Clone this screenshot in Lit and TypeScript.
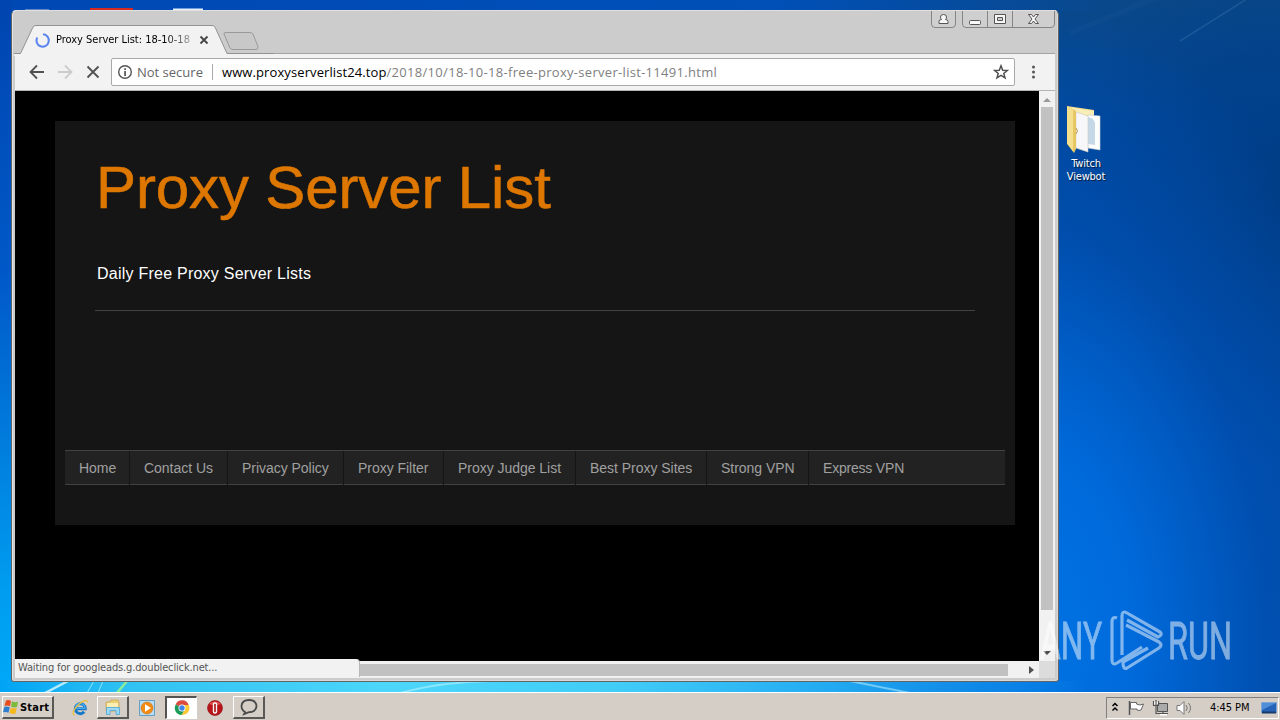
import { LitElement, css, html, svg } from 'lit';
import { customElement } from 'lit/decorators.js';

const NAV_LINKS = [
	'Home',
	'Contact Us',
	'Privacy Policy',
	'Proxy Filter',
	'Proxy Judge List',
	'Best Proxy Sites',
	'Strong VPN',
	'Express VPN',
];

@customElement('proxy-page')
export class ProxyPage extends LitElement {
	render() {
		return html`
			<div class="content">
				<header class="header">
					<h1 class="title">Proxy Server List</h1>
					<p class="description">Daily Free Proxy Server Lists</p>
				</header>
				<nav class="tabs">${NAV_LINKS.map((link) => html`<a class="tab">${link}</a>`)}</nav>
			</div>
		`;
	}

	static get styles() {
		return css`
			:host {
				display: block;
				box-sizing: border-box;
				padding: 30px 24px 0 40px;
				background: #000;
				font-family: 'Liberation Sans', Arial, sans-serif;
				overflow: hidden;
			}

			.content {
				box-sizing: border-box;
				height: 404px;
				padding: 30px 10px 0;
				background: #151515;
			}

			.header {
				box-sizing: border-box;
				height: 160px;
				margin: 0 30px 139px;
				padding-left: 2px;
				border-bottom: 1px solid #424242;
			}

			.title {
				margin: 0 0 0 -1px;
				padding-top: 1px;
				font-size: 60px;
				font-weight: 400;
				line-height: 72px;
				letter-spacing: -0.12px;
				color: #dd7700;
				-webkit-text-stroke: 0.6px #dd7700;
			}

			.description {
				margin: 40px 0 0;
				font-size: 16px;
				line-height: 20px;
				letter-spacing: 0.24px;
				color: #fff;
			}

			.tabs {
				display: grid;
				grid-template-columns: 65px 98px 116px 100px 132px 131px 102px 1fr;
				box-sizing: border-box;
				height: 35px;
				border-top: 1px solid #424242;
				border-bottom: 1px solid #424242;
				background: #222;
			}

			.tab {
				padding-left: 14px;
				border-right: 1px solid #151515;
				font-size: 14px;
				line-height: 34px;
				letter-spacing: -0.03px;
				white-space: nowrap;
				color: #a0a0a0;
			}

			.tab:last-child {
				border: 0;
				letter-spacing: -0.2px;
			}
		`;
	}
}

@customElement('browser-window')
export class BrowserWindow extends LitElement {
	render() {
		return html`
			<div class="titlebar">
				<svg class="tabstrip" width="260" height="32" viewBox="0 0 260 32">
					<path d="M0 29.500H6.500L19 3Q20 1.500 22 1.500H198Q200 1.500 201 3L213 29.500H260V32H0Z" fill="#f2f2f2" />
					<path d="M0 29.500H6.500L19 3Q20 1.500 22 1.500H198Q200 1.500 201 3L213 29.500H260" fill="none" stroke="#929292" />
					<path d="M212 8.500H236Q238 8.500 239 10L244 22.500Q244.500 25.500 242 25.500H219Q217 25.500 216 24L210 10Q209.500 8.500 212 8.500Z" fill="#c8c8c8" stroke="#9a9a9a" />
					<path d="M29 10.300A6.200 6.200 0 1 1 23.200 13.500" fill="none" stroke="#5a84f0" stroke-width="2" />
					<path d="M186.500 12.500l7 7m0-7l-7 7" stroke="#444" stroke-width="1.800" />
				</svg>
				<div class="tabtitle">Proxy Server List: 18-10-18</div>
				<svg class="controls" width="124" height="17" viewBox="0 0 124 17">
					<g fill="#cfcfcf" stroke="#858585">
						<path d="M.500 0V13Q.500 16.500 4 16.500H21Q24.500 16.500 24.500 13V0" />
						<path d="M31.500 0V13Q31.500 16.500 35 16.500H120Q123.500 16.500 123.500 13V0M56.500 0V16M81.500 0V16" />
					</g>
					<g fill="#f7f7f7" stroke="#555">
						<path d="M8 12.500V10.500Q8 8.500 10.500 8.500Q9.500 7.500 9.500 6Q9.500 3.500 12.500 3.500T15.500 6Q15.500 7.500 14.500 8.500Q17 8.500 17 10.500V12.500Z" />
						<rect x="38.500" y="9.500" width="11" height="4" rx="1" />
						<path d="M63.500 3.500h11v9h-11zM66.500 6.500h5v3h-5z" fill-rule="evenodd" />
						<path d="M97.500 3.500h3l2 2.500 2-2.500h3l-3.500 4.500 3.500 4.500h-3l-2-2.500-2 2.500h-3l3.500-4.500z" />
					</g>
				</svg>
			</div>
			<div class="toolbar">
				<svg class="buttons" width="90" height="36" viewBox="0 0 90 36">
					<g fill="none" stroke="#505050" stroke-width="1.800">
						<path d="M29 18H16M22 11.500L15.500 18L22 24.500" />
						<path d="M43 18H56M50 11.500L56.500 18L50 24.500" stroke="#ccc" />
						<path d="M72.500 12.500L83.500 23.500M83.500 12.500L72.500 23.500" />
					</g>
				</svg>
				<div class="omnibox">
					<svg width="16" height="16" viewBox="0 0 16 16">
						<circle cx="8" cy="8" r="6.300" fill="none" stroke="#555" stroke-width="1.400" />
						<path d="M7.200 4.300h1.700v1.700H7.200zM7.200 7h1.700v5H7.200z" fill="#555" />
					</svg>
					<span class="security">Not secure</span>
					<span class="url"
						><span class="host">www.proxyserverlist24.top</span
						><span class="path">/2018/10/18-10-18-free-proxy-server-list-11491.html</span></span
					>
					<svg class="star" width="16" height="16" viewBox="0 0 16 16">
						<path d="M8 1.800l1.700 4.400 4.700.2-3.600 3 1.200 4.500L8 11.400 4 13.900l1.200-4.500-3.600-3 4.700-.2z" fill="none" stroke="#505050" stroke-width="1.500" />
					</svg>
				</div>
				<svg class="menu" width="6" height="16" viewBox="0 0 6 16">
					<g fill="#555">
						<circle cx="3.500" cy="3" r="1.500" />
						<circle cx="3.500" cy="8" r="1.500" />
						<circle cx="3.500" cy="13" r="1.500" />
					</g>
				</svg>
			</div>
			<div class="view">
				<proxy-page></proxy-page>
				<div class="vscroll">
					<svg width="16" height="16"><path d="M4 11l4-4 4 4z" fill="#9a9a9a" /></svg>
					<div class="vthumb"></div>
					<svg width="16" height="16"><path d="M4 6l4 4 4-4z" fill="#505050" /></svg>
				</div>
				<div class="hscroll">
					<div class="hthumb"></div>
					<svg width="16" height="16"><path d="M6 4l5 4-5 4z" fill="#505050" /></svg>
				</div>
				<div class="corner"></div>
			</div>
			<div class="status">Waiting for googleads.g.doubleclick.net...</div>
		`;
	}

	static get styles() {
		return css`
			:host {
				display: flex;
				flex-direction: column;
				box-sizing: border-box;
				padding: 0 3px 3px 3px;
				border: 1px solid #646464;
				border-top-color: #e0e0e0;
				border-radius: 5px 5px 3px 3px;
				background: #ccc;
				box-shadow: inset 1px 0 #e5e5e5, inset -1px -1px #d8d8d8;
				font-family: 'Open Sans', 'Noto Sans', sans-serif;
			}

			svg {
				display: block;
				flex: none;
			}

			.titlebar {
				display: flex;
				position: relative;
				height: 43px;
				align-items: flex-end;
				justify-content: space-between;
				box-shadow: inset 0 -1px #a4a4a4;
			}

			.tabstrip {
				height: 32px;
				margin: 0 0 -2px -1px;
			}

			.tabtitle {
				position: absolute;
				left: 41px;
				top: 21px;
				width: 135px;
				overflow: hidden;
				white-space: nowrap;
				font: 11px/16px 'DejaVu Sans Condensed', 'DejaVu Sans', sans-serif;
				font-stretch: condensed;
				letter-spacing: -0.02px;
				color: #000;
				mask-image: linear-gradient(to right, #000 108px, rgba(0, 0, 0, 0.35) 134px);
			}

			.controls {
				align-self: flex-start;
			}

			.toolbar {
				display: flex;
				align-items: center;
				height: 37px;
				padding-right: 19px;
				background: #f2f2f2;
				border-bottom: 1px solid #b5b5b5;
				box-sizing: border-box;
			}

			.omnibox {
				display: flex;
				align-items: center;
				flex: 1;
				box-sizing: border-box;
				height: 28px;
				margin-left: 6px;
				padding: 0 5px;
				background: #fff;
				border: 1px solid #a9a9a9;
				border-radius: 2px;
				font-size: 13px;
				line-height: 18px;
				white-space: nowrap;
			}

			.security {
				box-sizing: border-box;
				width: 76px;
				margin-left: 4px;
				border-right: 1px solid #aaa;
				color: #666;
				line-height: 16px;
			}

			.url {
				flex: 1;
				margin-left: 9px;
			}

			.host {
				color: #000;
				letter-spacing: 0.1px;
			}

			.path {
				color: #808080;
				letter-spacing: 0.3px;
			}

			.menu {
				margin-left: 15px;
			}

			.view {
				display: grid;
				flex: 1;
				grid-template: minmax(0, 1fr) 17px / minmax(0, 1fr) 16px;
			}

			.vscroll {
				display: flex;
				flex-direction: column;
				background: #f1f1f1;
			}

			.vthumb {
				width: 12px;
				height: 503px;
				margin: 0 2px auto;
				background: #c1c1c1;
			}

			.hscroll {
				display: flex;
				align-items: center;
				justify-content: flex-end;
				background: #f1f1f1;
			}

			.hthumb {
				width: 900px;
				height: 12px;
				margin-right: 15px;
				background: #c1c1c1;
			}

			.corner {
				background: #dcdcdc;
			}

			.status {
				position: absolute;
				left: 3px;
				bottom: 4px;
				box-sizing: border-box;
				width: 345px;
				height: 18px;
				padding-left: 3px;
				border: solid #b8b8b8;
				border-width: 0 1px 0 0;
				border-radius: 0 4px 0 0;
				background: #f2f2f2;
				color: #555;
				font: 11px/18px 'DejaVu Sans Condensed', 'DejaVu Sans', sans-serif;
				font-stretch: condensed;
				letter-spacing: -0.14px;
			}
		`;
	}
}

const flagIcon = svg`
	<path d="M1.500 1v14" stroke="#555" stroke-width="1.500" />
	<path d="M2.500 2.500h6v1.500q3 2 7 0l-2.500 6q-2 1-4 0v-1h-6.500z" fill="#fff" stroke="#666" />
`;

const networkIcon = svg`
	<path d="M5.500 3.500h10v8h-10z" fill="#aaa" stroke="#555" />
	<path d="M1.500 1v4.500h5V1M4 0v5M4 6v7.500h12M11 12v3" fill="none" stroke="#555" stroke-width="1.200" />
	<path d="M2.200 1.500h1v3h-1zM4.800 1.500h1v3h-1zM8 14h7v1.500H8z" fill="#fff" />
`;

const speakerIcon = svg`
	<path d="M1 5.500h3l4-4v13l-4-4H1z" fill="#fff" stroke="#777" />
	<path d="M10 5q2.500 3 0 6M12.500 3q4 5 0 10" fill="none" stroke="#777" />
`;

@customElement('task-bar')
export class TaskBar extends LitElement {
	render() {
		return html`
			<div class="start">
				<svg width="16" height="16" viewBox="0 0 16 16">
					<path d="M3 1.500Q5.500.5 8 2L7 7.300Q4.500 6 1.500 7z" fill="#e84b20" />
					<path d="M9 2.300Q12 4 15 2.500L14 8Q11 9 8 7.500z" fill="#7db93b" />
					<path d="M1.300 8Q4 7 6.800 8.300L5.500 13.700Q3 12.300 0 13.300z" fill="#2f7fd1" />
					<path d="M7.800 8.500Q11 10 13.700 9L12.500 14.500Q9.500 15.500 6.500 14z" fill="#f5b91e" />
				</svg>
				Start
			</div>
			<div class="app ie">
				<svg width="18" height="18" viewBox="0 0 18 18">
					<path d="M5 9.700H14.300A5 5 0 1 0 13.200 12.800" fill="none" stroke="#1878c8" stroke-width="3" />
					<path d="M5 9.300H14A4.800 4.800 0 0 0 4.500 8.500" fill="none" stroke="#46aaf0" stroke-width="1.300" />
					<path d="M3.500 16C.5 15.500 2.500 10 7.500 5.500S17 .5 16.500 3.500" fill="none" stroke="#e9c13a" stroke-width="1.300" />
				</svg>
			</div>
			<div class="app raised">
				<svg width="18" height="18" viewBox="0 0 18 18">
					<path d="M2 4h4l1-2h7l1 2v9H2z" fill="#edcf76" stroke="#c6a14c" stroke-width=".7" />
					<path d="M3 5h11v5H3z" fill="#fbeeb3" />
					<path d="M2.500 9.500h13v7h-3.500v-4H6v4H2.500z" fill="#9ed7f3" stroke="#4ba6d8" stroke-width=".8" />
				</svg>
			</div>
			<div class="app media">
				<svg width="18" height="18" viewBox="0 0 18 18">
					<path d="M1.500 1.500h15v15h-15z" fill="#b8dcf4" stroke="#649fc8" />
					<circle cx="9" cy="9" r="6" fill="#f28b13" stroke="#d46b05" stroke-width=".5" />
					<path d="M7 5.200v7.600L13 9z" fill="#fff" />
				</svg>
			</div>
			<div class="app pressed">
				<svg width="16" height="16" viewBox="0 0 16 16">
					<path d="M8 8L1.700 4.500A7 7 0 0 1 14.700 5H8z" fill="#dc4b3e" />
					<path d="M8 8L1.700 4.500A7 7 0 0 0 7.500 15L11 9.700z" fill="#1c9c58" />
					<path d="M8 5h6.700A7 7 0 0 1 7.500 15L11 9.700z" fill="#fcc934" />
					<circle cx="8" cy="8" r="3.500" fill="#fff" />
					<circle cx="8" cy="8" r="2.700" fill="#4285e8" />
				</svg>
			</div>
			<div class="app opera">
				<svg width="18" height="18" viewBox="0 0 18 18">
					<circle cx="9" cy="9" r="7.500" fill="#b9141a" stroke="#8d1014" stroke-width=".6" />
					<path d="M3 5Q9 0 15 5Q9 7 3 5z" fill="#e65a55" />
					<rect x="6.800" y="3.300" width="4.400" height="11.400" rx="2" fill="#f4f4f4" />
					<rect x="8.200" y="4.800" width="1.600" height="8.400" rx=".8" fill="#a11" />
				</svg>
			</div>
			<div class="app raised">
				<svg width="18" height="18" viewBox="0 0 18 18">
					<path d="M5 14Q1.500 12 1.500 8Q2 2 9 2t7.500 6Q16 14 9 14.200L4 16.200z" fill="none" stroke="#4a4a4a" stroke-width="1.800" />
				</svg>
			</div>
			<div class="tray">
				<svg class="chevrons" width="8" height="12" viewBox="0 0 8 12">
					<path d="M1.500 4L4 1.500 6.500 4M1.500 8.500L4 6l2.500 2.500" fill="none" stroke="#000" stroke-width="1.500" />
				</svg>
				<svg width="17" height="16" viewBox="0 0 17 16">${flagIcon}</svg>
				<svg width="17" height="16" viewBox="0 0 17 16">${networkIcon}</svg>
				<svg width="17" height="16" viewBox="0 0 17 16">${speakerIcon}</svg>
				<span class="clock">4:45 PM</span>
				<svg width="16" height="14" viewBox="0 0 16 14">
					<path d="M.5 1.500h15v10H.5z" fill="#2463b8" stroke="#7fa5d3" />
					<path d="M1 2h14L1 9z" fill="#4f8fda" />
					<path d="M1 11.500h14" stroke="#173a6b" stroke-width="2" />
				</svg>
			</div>
		`;
	}

	static get styles() {
		return css`
			:host {
				display: flex;
				align-items: center;
				box-sizing: border-box;
				height: 28px;
				padding: 3px 1px 1px 2px;
				border-top: 1px solid #fff;
				background: #d5cec7;
				font-family: 'DejaVu Sans Condensed', 'DejaVu Sans', sans-serif;
			}

			svg {
				display: block;
				flex: none;
			}

			.start,
			.raised {
				border: solid;
				border-width: 1px 2px 2px 1px;
				border-color: #fff #5a5855 #5a5855 #fff;
			}

			.start {
				display: flex;
				align-items: center;
				box-sizing: border-box;
				width: 52px;
				height: 23px;
				margin-right: 10px;
				gap: 1px;
				font-size: 11px;
				font-weight: 700;
				font-stretch: condensed;
				letter-spacing: 0.2px;
			}

			.app {
				display: flex;
				align-items: center;
				justify-content: center;
				box-sizing: border-box;
				width: 32px;
				height: 23px;
				margin-right: 1px;
			}

			.app + .app {
				margin-right: 2px;
			}

			.pressed {
				background: #fff;
				border: solid;
				border-width: 2px 1px 1px 2px;
				border-color: #55534f #fff #fff #55534f;
			}

			.tray {
				display: flex;
				align-items: center;
				box-sizing: border-box;
				width: 173px;
				height: 22px;
				margin-left: auto;
				padding-left: 4px;
				gap: 7px;
				border: 1px solid;
				border-color: #808080 #fff #fff #808080;
			}

			.chevrons {
				margin-right: 2px;
			}

			.clock {
				width: 42px;
				margin: 0 2px 0 10px;
				font-size: 11px;
				font-stretch: condensed;
				letter-spacing: -0.05px;
				white-space: nowrap;
			}
		`;
	}
}

@customElement('app-root')
export class AppRoot extends LitElement {
	render() {
		return html`
			<div class="desktop">
				<svg class="streaks" width="1280" height="692" viewBox="0 0 1280 692">
					<path d="M1180 41L1250 -3" stroke="#6aa2cf" stroke-width="1.500" opacity=".2" />
					<path d="M1070 33L1160 -4" stroke="#6aa2cf" stroke-width="5" opacity=".04" />
					<path d="M45 693L68 681" stroke="#dffaff" stroke-width="2.500" opacity=".8" />
					<path d="M87 693L94 681M98 693L103 681" stroke="#bdf5ff" opacity=".7" />
					<path d="M117 693L127 681" stroke="#8bed9b" stroke-width="2.500" />
					<path d="M400 693Q440 682 490 681M850 681L910 693" stroke="#c8f7ff" stroke-width="2" fill="none" opacity=".5" />
					<path d="M25 9h24v3H25z" fill="#5f86c6" />
					<path d="M90 8h43v3H90z" fill="#d82a20" />
					<path d="M173 8.500h30v3H173z" fill="#e4f0fa" />
				</svg>
				<div class="shortcut">
					<svg width="38" height="50" viewBox="0 0 38 50">
						<path d="M1 1L28 5V12L10 12 8 48z" fill="#ecd98a" />
						<path d="M3 2L28 6V10L12 10z" fill="#f8edb5" />
						<path d="M22 10L34 11V45L22 43z" fill="#fff" stroke="#cad0d4" stroke-width=".6" />
						<path d="M22 12q6 1 7 6v22l-7-1z" fill="#c5d8e8" />
						<path d="M10 7L22 11V47L10 43z" fill="#f7f7f9" stroke="#d1cdbd" stroke-width=".6" />
						<path d="M1 1L10 6V44L8 48 1 39z" fill="#e6c763" />
						<path d="M1 1L7 5V46L1 38z" fill="#f5e08f" />
						<path d="M10 23q3 3 0 6" fill="none" stroke="#b69a4e" />
					</svg>
					<span>Twitch<br />Viewbot</span>
				</div>
				<browser-window class="window"></browser-window>
			</div>
			<task-bar></task-bar>
			<svg class="watermark" width="220" height="80" viewBox="0 0 220 80">
				<g class="word">
					<text x="1" y="51" textLength="62" lengthAdjust="spacingAndGlyphs">ANY</text>
					<text x="129" y="51" textLength="64" lengthAdjust="spacingAndGlyphs">RUN</text>
				</g>
				<path
					d="M78 10Q73 8 73 14V52Q73 58 78 55L103 39M83 47V8Q83 2 88 5L121 24Q124 27 119 29L88 12M87 17L120 34Q124 37 120 40L88 60Q84 62 84 54L109 40"
					fill="none"
					stroke="#fff"
					stroke-width="3.200"
					stroke-linejoin="round"
				/>
			</svg>
		`;
	}

	static get styles() {
		return css`
			:host {
				display: flex;
				flex-direction: column;
				position: relative;
				width: 1280px;
				height: 720px;
				overflow: hidden;
			}

			.desktop {
				position: relative;
				flex: 1;
				background:
					linear-gradient(to right, #00a4f5, #30c2f2 10%, #4cd6fa 30%, #42cdf7 48%, #22aaf2 65%, rgba(0, 115, 230, 0) 85%) 0 100% / 100% 11px no-repeat,
					linear-gradient(to bottom, #0045b0, #0059c8 40%, #009cf0 85%, #00a8f8) 0 0 / 12px 100% no-repeat,
					linear-gradient(to right, #0048b4, #0050b8 60%, rgba(0, 72, 150, 0) 88%) 0 0 / 100% 11px no-repeat,
					radial-gradient(ellipse 380px 640px at 1020px 640px, #0074e4, #006adb 30%, rgba(0, 82, 184, 0.6) 65%, rgba(0, 72, 165, 0)),
					radial-gradient(ellipse 260px 260px at 1290px 200px, #003c84, rgba(0, 62, 140, 0)),
					linear-gradient(to bottom, #0a4888, #00479a 18%, #0048a0 60%, #004da6);
			}

			.streaks {
				position: absolute;
				inset: 0;
			}

			.window {
				position: absolute;
				left: 11px;
				top: 10px;
				width: 1048px;
				height: 672px;
			}

			.shortcut {
				display: flex;
				position: absolute;
				left: 1056px;
				top: 105px;
				width: 60px;
				flex-direction: column;
				align-items: center;
				font: 11px/13px 'DejaVu Sans Condensed', 'DejaVu Sans', sans-serif;
				font-stretch: condensed;
				letter-spacing: -0.2px;
				text-align: center;
				color: #fff;
				text-shadow: 1px 1px 1px rgba(0, 0, 0, 0.7);
			}

			.shortcut svg {
				margin: 0 0 2px -2px;
			}

			.watermark {
				position: absolute;
				left: 1039px;
				top: 608px;
				overflow: visible;
				opacity: 0.5;
			}

			.word {
				fill: #fff;
				stroke: #fff;
				stroke-width: 0.8px;
				font-family: Roboto, sans-serif;
				font-size: 52px;
			}
		`;
	}
}
